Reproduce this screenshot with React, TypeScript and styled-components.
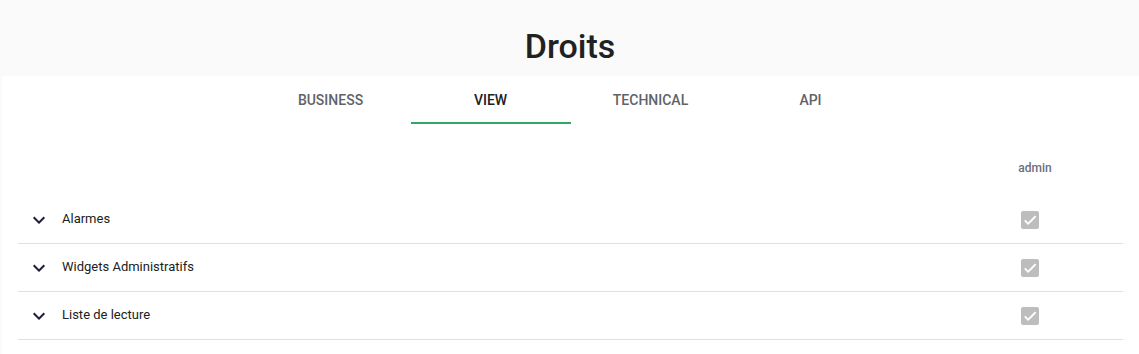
import React from "react";
import styled, { createGlobalStyle } from "styled-components";

const GlobalStyle = createGlobalStyle`
  html, body { margin: 0; padding: 0; background: #fafafa; }
  body { font-family: Roboto, "Noto Sans", Arial, sans-serif; color: #212121; }
  * { box-sizing: border-box; }
`;

const Page = styled.div`
  display: flex;
  flex-direction: column;
  min-height: 354px;
  background: #fafafa;
`;

const Header = styled.header`
  height: 76px;
  display: flex;
  align-items: flex-end;
  justify-content: center;
  padding-left: 1px;
`;

const Title = styled.h1`
  margin: 0 0 10px;
  font-size: 34px;
  font-weight: 500;
  line-height: 40px;
  color: #212121;
`;

const Card = styled.section`
  flex: 1;
  margin-left: 2px;
  background: #ffffff;
  display: flex;
  flex-direction: column;
`;

const TabBar = styled.nav`
  display: flex;
  justify-content: center;
  height: 48px;
`;

const Tab = styled.div<{ $active?: boolean }>`
  width: 160px;
  display: flex;
  align-items: center;
  justify-content: center;
  font-size: 14px;
  font-weight: 500;
  text-transform: uppercase;
  color: ${(p) => (p.$active ? "#212121" : "#5f6368")};
  border-bottom: 2px solid ${(p) => (p.$active ? "#2eaa66" : "transparent")};
  padding-top: 1px;
`;

const Table = styled.div`
  padding: 16px 16px 0;
  display: flex;
  flex-direction: column;
`;

const HeadRow = styled.div`
  display: grid;
  grid-template-columns: 1fr 130px 23px;
  height: 56px;
  align-items: center;
`;

const HeadCell = styled.div`
  grid-column: 2;
  text-align: center;
  font-size: 12px;
  font-weight: 500;
  color: #6e6e7a;
  padding-bottom: 1px;
`;

const Row = styled.div`
  display: grid;
  grid-template-columns: 1fr 130px 23px;
  height: 48px;
  align-items: center;
  border-bottom: 1px solid #e0e0e0;
`;

const Label = styled.div`
  display: flex;
  align-items: center;
  gap: 11px;
  padding-left: 9px;
  font-size: 13px;
  color: #212121;
  padding-bottom: 2px;
`;

const Chevron = styled.svg`
  width: 24px;
  height: 24px;
  fill: #1c1b33;
  flex: none;
  margin-top: 2px;
`;

const CheckCell = styled.div`
  display: flex;
  justify-content: center;
  padding-right: 10px;
`;

const Checkbox = styled.span`
  width: 18px;
  height: 18px;
  border-radius: 2px;
  background: #bdbdbd;
  display: flex;
  align-items: center;
  justify-content: center;
`;

const rows = ["Alarmes", "Widgets Administratifs", "Liste de lecture"];
const tabs = ["Business", "View", "Technical", "API"];

export default function App() {
  return (
    <Page>
      <GlobalStyle />
      <Header>
        <Title>Droits</Title>
      </Header>
      <Card>
        <TabBar>
          {tabs.map((t) => (
            <Tab key={t} $active={t === "View"}>
              {t}
            </Tab>
          ))}
        </TabBar>
        <Table>
          <HeadRow>
            <HeadCell>admin</HeadCell>
          </HeadRow>
          {rows.map((r) => (
            <Row key={r}>
              <Label>
                <Chevron viewBox="0 0 24 24">
                  <path d="M16.59 8.59L12 13.17 7.41 8.59 6 10l6 6 6-6z" />
                </Chevron>
                {r}
              </Label>
              <CheckCell>
                <Checkbox>
                  <svg width="18" height="18" viewBox="0 0 24 24">
                    <path
                      d="M5 12.5l4.5 4.5L19.5 7"
                      fill="none"
                      stroke="#ffffff"
                      strokeWidth="2.4"
                    />
                  </svg>
                </Checkbox>
              </CheckCell>
            </Row>
          ))}
        </Table>
      </Card>
    </Page>
  );
}
